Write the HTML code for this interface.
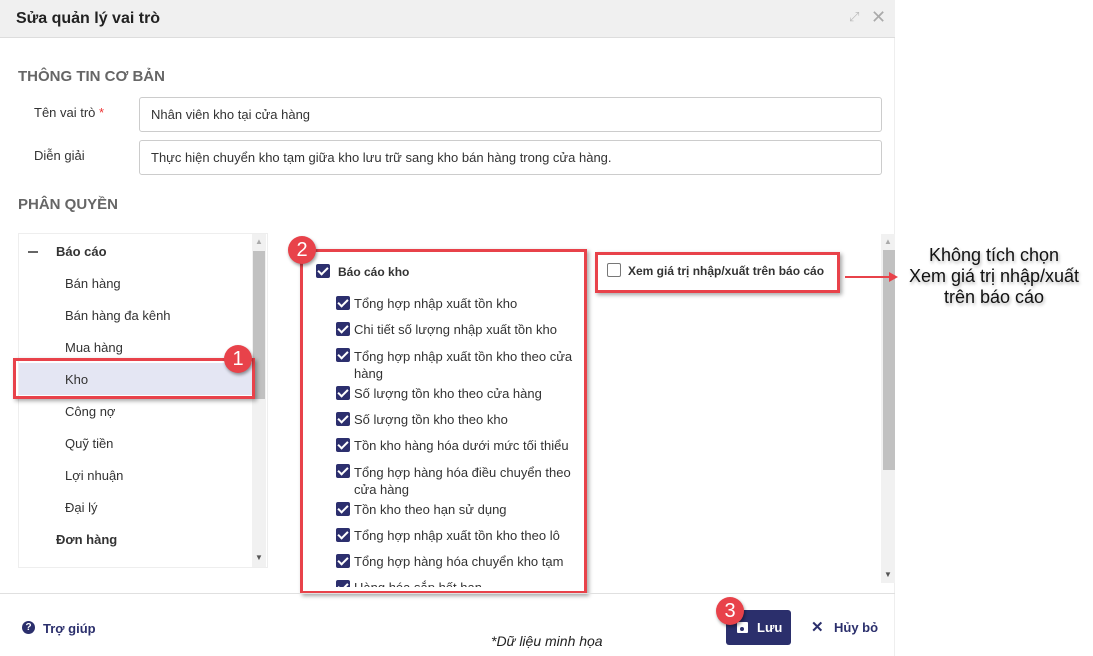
<!DOCTYPE html>
<html><head><meta charset="utf-8"><style>
*{margin:0;padding:0;box-sizing:border-box}
body{width:1093px;height:656px;background:#fff;font-family:"Liberation Sans",sans-serif;color:#333;position:relative;overflow:hidden;font-size:13px}
.a{position:absolute;white-space:nowrap}
.dlg{position:absolute;left:0;top:0;width:895px;height:656px;background:#fff;border-right:1px solid #eee}
.hdr{position:absolute;left:0;top:0;width:895px;height:38px;background:#f0f0f0;border-bottom:1px solid #ddd}
.sec{font-weight:bold;font-size:15px;color:#666}
.inp{position:absolute;left:139px;width:743px;height:35px;border:1px solid #ccc;border-radius:3px;padding:9px 11px;font-size:13px;color:#333}
.cb{position:absolute;width:14px;height:14px;background:#2c2f6e;border-radius:2px}
.cb:after{content:"";position:absolute;left:4px;top:1px;width:4px;height:8px;border:solid #fff;border-width:0 2px 2px 0;transform:rotate(45deg)}
.red{position:absolute;border:3px solid #e8424a;box-shadow:2px 2px 4px rgba(0,0,0,.35)}
.bd{position:absolute;width:28px;height:28px;border-radius:50%;background:#e8424a;color:#fff;font-size:20px;text-align:center;line-height:28px;box-shadow:1px 2px 3px rgba(0,0,0,.4)}
.ti{font-size:13px;color:#333}
</style></head><body>
<div class="dlg">
<div class="hdr"><div class="a" style="left:16px;top:10px;font-weight:bold;font-size:16px;color:#222">Sửa quản lý vai trò</div>
<div class="a" style="left:849px;top:9px;color:#bbb;font-size:13px">⤢</div>
<div class="a" style="left:871px;top:7px;color:#aaa;font-size:18px">✕</div></div>
<div class="a sec" style="left:18px;top:68px">THÔNG TIN CƠ BẢN</div>
<div class="a" style="left:34px;top:105px">Tên vai trò <span style="color:#e33">*</span></div>
<div class="inp" style="top:97px">Nhân viên kho tại cửa hàng</div>
<div class="a" style="left:34px;top:148px">Diễn giải</div>
<div class="inp" style="top:140px">Thực hiện chuyển kho tạm giữa kho lưu trữ sang kho bán hàng trong cửa hàng.</div>
<div class="a sec" style="left:18px;top:196px">PHÂN QUYỀN</div>
<!-- tree -->
<div class="a" style="left:18px;top:233px;width:250px;height:335px;border:1px solid #eee"></div>
<div class="a" style="left:252px;top:234px;width:14px;height:333px;background:#f1f1f1"></div>
<div class="a" style="left:253px;top:251px;width:12px;height:148px;background:#c1c1c1"></div>
<div class="a" style="left:255px;top:237px;color:#aaa;font-size:8px">▲</div>
<div class="a" style="left:255px;top:553px;color:#555;font-size:8px">▼</div>
<div class="a" style="left:19px;top:363px;width:233px;height:32px;background:#e4e6f3"></div>
<div class="a" style="left:28px;top:250px;width:10px;height:2px;background:#666;top:251px"></div>
<div class="a ti" style="left:56px;top:244px;font-weight:bold">Báo cáo</div>
<div class="a ti" style="left:65px;top:276px">Bán hàng</div>
<div class="a ti" style="left:65px;top:308px">Bán hàng đa kênh</div>
<div class="a ti" style="left:65px;top:340px">Mua hàng</div>
<div class="a ti" style="left:65px;top:372px">Kho</div>
<div class="a ti" style="left:65px;top:404px">Công nợ</div>
<div class="a ti" style="left:65px;top:436px">Quỹ tiền</div>
<div class="a ti" style="left:65px;top:468px">Lợi nhuận</div>
<div class="a ti" style="left:65px;top:500px">Đại lý</div>
<div class="a ti" style="left:56px;top:532px;font-weight:bold">Đơn hàng</div>
<div class="red" style="left:13px;top:358px;width:242px;height:41px"></div>
<div class="bd" style="left:224px;top:345px">1</div>
<!-- checks -->
<div class="cb" style="left:316px;top:264px"></div>
<div class="a ti" style="left:338px;top:265px;font-weight:bold;font-size:12px">Báo cáo kho</div>
<div class="cb" style="left:336px;top:296px"></div><div class="a ti" style="left:354px;top:296px">Tổng hợp nhập xuất tồn kho</div>
<div class="cb" style="left:336px;top:322px"></div><div class="a ti" style="left:354px;top:322px">Chi tiết số lượng nhập xuất tồn kho</div>
<div class="cb" style="left:336px;top:348px"></div><div class="a ti" style="left:354px;top:348px;line-height:17px">Tổng hợp nhập xuất tồn kho theo cửa<br>hàng</div>
<div class="cb" style="left:336px;top:386px"></div><div class="a ti" style="left:354px;top:386px">Số lượng tồn kho theo cửa hàng</div>
<div class="cb" style="left:336px;top:412px"></div><div class="a ti" style="left:354px;top:412px">Số lượng tồn kho theo kho</div>
<div class="cb" style="left:336px;top:438px"></div><div class="a ti" style="left:354px;top:438px">Tồn kho hàng hóa dưới mức tối thiểu</div>
<div class="cb" style="left:336px;top:464px"></div><div class="a ti" style="left:354px;top:464px;line-height:17px">Tổng hợp hàng hóa điều chuyển theo<br>cửa hàng</div>
<div class="cb" style="left:336px;top:502px"></div><div class="a ti" style="left:354px;top:502px">Tồn kho theo hạn sử dụng</div>
<div class="cb" style="left:336px;top:528px"></div><div class="a ti" style="left:354px;top:528px">Tổng hợp nhập xuất tồn kho theo lô</div>
<div class="cb" style="left:336px;top:554px"></div><div class="a ti" style="left:354px;top:554px">Tổng hợp hàng hóa chuyển kho tạm</div>
<div class="a" style="left:336px;top:580px;width:240px;height:7px;overflow:hidden"><div class="cb" style="left:0;top:0"></div><div class="a ti" style="left:18px;top:0">Hàng hóa sắp hết hạn</div></div>
<div class="red" style="left:300px;top:249px;width:287px;height:345px"></div>
<div class="bd" style="left:288px;top:236px">2</div>
<!-- right -->
<div class="a" style="left:607px;top:263px;width:14px;height:14px;border:1px solid #777;border-radius:2px"></div>
<div class="a" style="left:628px;top:264px;font-weight:bold;font-size:12px;color:#333">Xem giá trị nhập/xuất trên báo cáo</div>
<div class="red" style="left:595px;top:252px;width:245px;height:41px"></div>
<div class="a" style="left:881px;top:234px;width:14px;height:349px;background:#f1f1f1"></div>
<div class="a" style="left:883px;top:250px;width:12px;height:220px;background:#c1c1c1"></div>
<div class="a" style="left:884px;top:237px;color:#aaa;font-size:8px">▲</div>
<div class="a" style="left:884px;top:570px;color:#555;font-size:8px">▼</div>
<!-- footer -->
<div class="a" style="left:0;top:593px;width:895px;height:1px;background:#e0e0e0"></div>
<div class="a" style="left:22px;top:621px;width:13px;height:13px;border-radius:50%;background:#2b2f6c;color:#fff;font-size:10px;font-weight:bold;text-align:center;line-height:13px">?</div>
<div class="a" style="left:43px;top:621px;font-weight:bold;color:#2b2f6c">Trợ giúp</div>
<div class="a" style="left:491px;top:633px;font-style:italic;font-size:14px;color:#222">*Dữ liệu minh họa</div>
<div class="a" style="left:726px;top:610px;width:65px;height:35px;background:#2b2f6c;border-radius:3px"></div>
<div class="a" style="left:737px;top:622px;width:11px;height:11px;background:#fff;border-radius:1px"></div>
<div class="a" style="left:740px;top:627px;width:4px;height:4px;background:#2b2f6c;border-radius:50%"></div>
<div class="a" style="left:757px;top:620px;color:#fff;font-weight:bold">Lưu</div>
<div class="bd" style="left:716px;top:597px">3</div>
<div class="a" style="left:811px;top:618px;color:#2b2f6c;font-size:15px;font-weight:bold">✕</div>
<div class="a" style="left:834px;top:620px;color:#2b2f6c;font-weight:bold">Hủy bỏ</div>
</div>
<!-- annotation -->
<div class="a" style="left:845px;top:276px;width:46px;height:2px;background:#e8424a"></div>
<div class="a" style="left:889px;top:272px;width:0;height:0;border-left:9px solid #e8424a;border-top:5px solid transparent;border-bottom:5px solid transparent"></div>
<div class="a" style="left:895px;top:245px;width:198px;text-align:center;font-size:18px;line-height:21px;color:#111;text-shadow:1px 2px 3px rgba(0,0,0,.3)">Không tích chọn<br>Xem giá trị nhập/xuất<br>trên báo cáo</div>
</body></html>
